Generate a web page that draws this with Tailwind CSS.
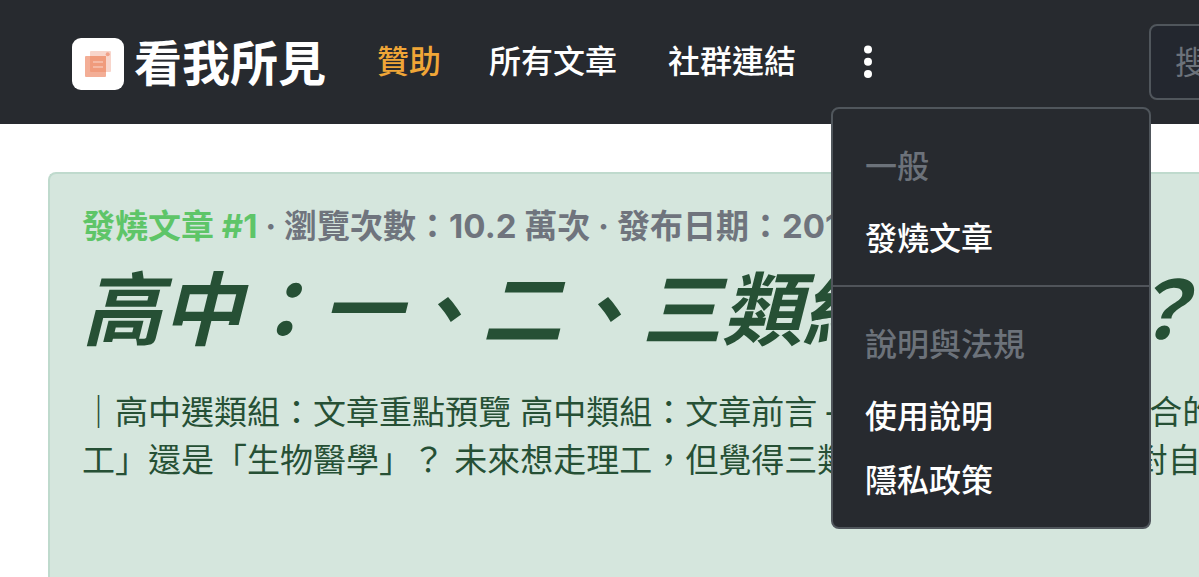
<!DOCTYPE html>
<html lang="zh-Hant">
<head>
<meta charset="utf-8">
<meta name="viewport" content="width=device-width, initial-scale=1">
<title>看我所見</title>
<script src="https://cdn.jsdelivr.net/npm/@tailwindcss/browser@4"></script>
</head>
<body class="flex h-screen flex-col overflow-hidden bg-white font-['Inter','Noto_Sans_CJK_TC',sans-serif] text-[32px]">
  <header class="h-[124px] shrink-0 bg-[#272a2f] pl-[72px] text-white">
    <nav class="flex h-full items-center whitespace-nowrap font-medium leading-[48px]">
      <a href="#" class="flex items-center gap-[10px] pt-1 text-5xl font-bold">
        <svg class="size-[52px]" viewBox="0 0 52 52" aria-hidden="true">
          <rect width="52" height="52" rx="9" fill="#fff"/>
          <rect x="18" y="13" width="21" height="21" rx="1" fill="#f8d5cb"/>
          <rect x="13" y="18" width="21" height="21" rx="1" fill="#f3ae96"/>
          <path d="M18 18h16v16H19a1 1 0 0 1-1-1z" fill="#f09b7c"/>
          <path d="M21 24h10M21 29h10" stroke="#f5b9a4" stroke-width="2"/>
          <circle cx="35.7" cy="16.3" r="2" fill="#f0a28a"/>
        </svg>
        看我所見
      </a>
      <a href="#" class="ml-[51px] text-[#f0a637]">贊助</a>
      <a href="#" class="ml-12">所有文章</a>
      <a href="#" class="ml-[51px]">社群連結</a>
      <div class="relative ml-[62px]">
        <button type="button" aria-label="更多" aria-expanded="true" class="flex h-12 w-5 items-center justify-center">
          <svg class="h-9 w-5" viewBox="0 0 20 36" fill="#fff" aria-hidden="true"><circle cx="10" cy="5.5" r="4"/><circle cx="10" cy="17.7" r="4"/><circle cx="10" cy="30" r="4"/></svg>
        </button>
        <div class="absolute -left-[27px] top-[69px] z-10 w-80 rounded-lg border-2 border-[#50565c] bg-[#272a2f] pt-4 pb-4">
          <h6 class="px-8 pt-[18px] pb-[14px] font-medium text-[#6c727a]">一般</h6>
          <a href="#" class="block px-8 pt-[10px] pb-[6px]">發燒文章</a>
          <hr class="my-4 border-t-2 border-[#50545a]">
          <h6 class="px-8 pt-[18px] pb-[14px] font-medium text-[#6c727a]">說明與法規</h6>
          <a href="#" class="block px-8 pt-[10px] pb-[6px]">使用說明</a>
          <a href="#" class="block px-8 pt-[10px] pb-[6px]">隱私政策</a>
        </div>
      </div>
      <input type="search" aria-label="搜尋" placeholder="搜尋" class="ml-[271px] h-[76px] w-96 shrink-0 rounded-lg border-2 border-[#50565c] bg-[#23272f] px-6 font-normal placeholder:text-[#6c727a]">
    </nav>
  </header>
  <main class="flex flex-1 flex-col pt-12 pl-12">
    <article class="flex-1 overflow-hidden whitespace-nowrap rounded-tl-lg border-2 border-r-0 border-b-0 border-[#bfdacd] bg-[#d5e6dd] px-8 pt-7 text-[#265035]">
      <p class="text-[33px] font-bold leading-[48px] text-[#6f747d]"><span class="text-[#5ec568]">發燒文章 #1</span> · 瀏覽次數：10.2 萬次 · 發布日期：2019-07-10</p>
      <h1 class="text-[80px] font-bold italic leading-[120px]">高中：一、二、三類組怎麼選？</h1>
      <p class="mt-[18px] text-[33px] leading-[48px]">｜高中選類組：文章重點預覽 高中類組：文章前言 – 高中該如何選擇最適合的「理<br>工」還是「生物醫學」？ 未來想走理工，但覺得三類組的前3志願較廣，對自己</p>
    </article>
  </main>
</body>
</html>
